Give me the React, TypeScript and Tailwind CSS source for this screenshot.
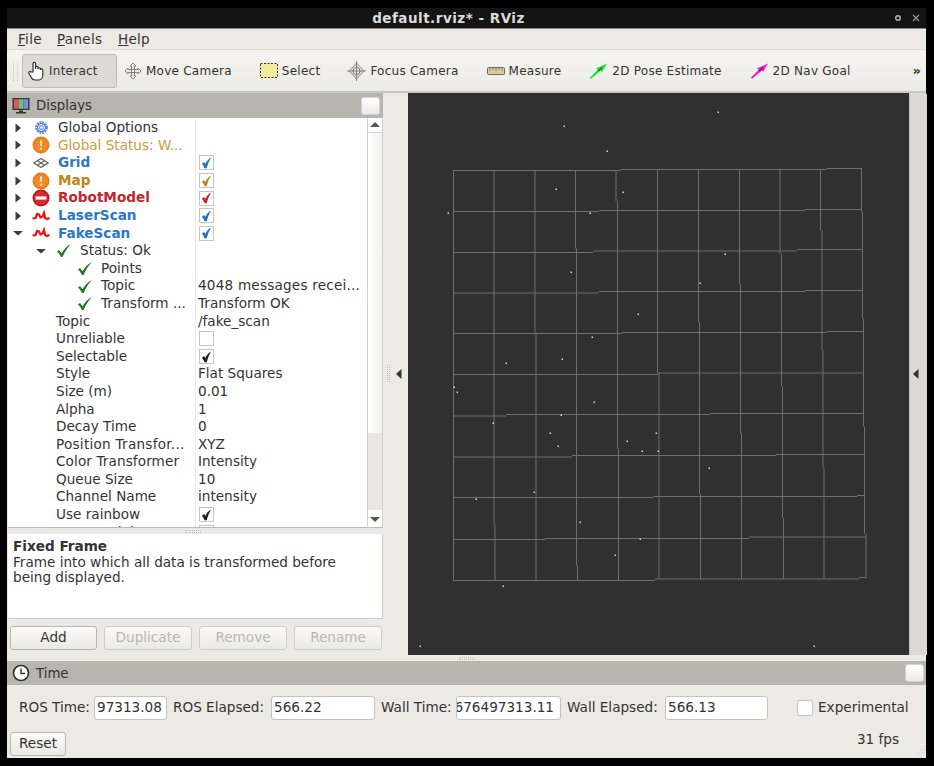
import React from "react";

const H: number[][] = [
  [170.5,453,621],[169.5,621,827],[168.5,827,862],
  [211.5,453,599],[210.5,599,805],[209.5,805,862],
  [252.5,453,593],[251,593,797],[249.5,797,863],
  [293,453,599],[291.5,599,805],[290.5,805,863],
  [333.5,453,622],[332.5,622,827],[331.5,827,863],
  [374.5,453,658],[373,658,864],
  [416,453,506],[414.5,506,710],[413.5,710,864],
  [457,453,572],[455.5,572,776],[454.5,776,865],
  [497.5,453,653],[496.5,653,857],[495.5,857,865],
  [539.5,453,545],[538.5,545,749],[537,749,866],
  [580.5,453,655],[579,655,859],[577.5,859,866],
];
const V: number[][] = [
  [453.5,170,580.5],
  [494,170,524.5],[495,524.5,580],
  [535,170,332.5],[536,332.5,580],
  [575.5,170,248.5],[576.5,248.5,565],[577.5,565,580],
  [616,170,201],[617.5,201,448.5],[618.5,448.5,580],
  [657.5,170,373],[659,373,579],
  [698.5,170,322],[699.5,322,493.5],[700.5,493.5,579],
  [739.5,170,284],[740.5,284,433],[741.5,433,579],
  [780,170,253.5],[781.5,253.5,386],[782.5,386,518],[783.5,518,579],
  [820.5,170,230.5],[822,230.5,350],[823,350,467.5],[824,467.5,579],
  [861.5,169,211.5],[862.5,211.5,319],[863.5,319,426.5],[864.5,426.5,533.5],[866,533.5,578],
];
const DOTS: number[][] = [
  [564,126],[718,112],[607,151],[556,189],[623,192],[448,213],[590,213],[571,272],[725,254],[700,283],
  [638,314],[592,337],[506,363],[562,359],[454,387],[457,392],[594,402],[561,415],[493,423],[550,433],
  [558,446],[627,441],[656,433],[642,451],[658,451],[709,468],[476,499],[534,492],[580,522],[640,539],
  [615,555],[503,586],[420,646],[814,646],
];

const font = "font-['DejaVu_Sans',sans-serif]";

function Arrow({ open }: { open?: boolean }) {
  return (
    <svg width="12" height="12" viewBox="0 0 12 12" className="shrink-0">
      {open ? <path d="M1 4h10L6 8.500z" fill="#3c3c3c" /> : <path d="M3.500 1.500v9L9 6z" fill="#3c3c3c" />}
    </svg>
  );
}
function Gear() {
  return (
    <svg width="15" height="15" viewBox="0 0 24 24">
      <circle cx="12" cy="12" r="8" fill="none" stroke="#5c8fd6" strokeWidth="4.500" strokeDasharray="3 1.200" />
      <circle cx="12" cy="12" r="6.400" fill="none" stroke="#3f74c2" strokeWidth="1.600" />
      <circle cx="12" cy="12" r="3" fill="none" stroke="#6d9be0" strokeWidth="2" />
    </svg>
  );
}
function Warn() {
  return (
    <svg width="18" height="18" viewBox="0 0 18 18">
      <circle cx="9" cy="9" r="8.500" fill="#ea7d18" />
      <circle cx="9" cy="9" r="6.500" fill="#f08a2a" />
      <rect x="8" y="4" width="2" height="6" rx="1" fill="#fbdcb8" />
      <circle cx="9" cy="12.800" r="1.200" fill="#fbdcb8" />
    </svg>
  );
}
function Err() {
  return (
    <svg width="18" height="18" viewBox="0 0 18 18">
      <circle cx="9" cy="9" r="8.500" fill="#c4141c" />
      <circle cx="9" cy="9" r="6.800" fill="#d92a2f" />
      <rect x="3.600" y="7.400" width="10.800" height="3.200" fill="#ffffff" />
    </svg>
  );
}
function GridIcon() {
  return (
    <svg width="16" height="12" viewBox="0 0 16 12">
      <path d="M8 1.500 15 6l-7 4.500L1 6zM4.500 3.800 11.500 8.200M11.500 3.800 4.500 8.200" fill="none" stroke="#666" strokeWidth="1.300" />
    </svg>
  );
}
function Laser() {
  return (
    <svg width="18" height="12" viewBox="0 0 18 12">
      <path d="M0.500 8.500 3.500 8 5 4 7 4.500 8.500 7.500 10.500 6.500 12 3 13 8 15 9 17.500 8" fill="none" stroke="#ee1111" strokeWidth="2.200" />
    </svg>
  );
}
function Check() {
  return (
    <svg width="16" height="15" viewBox="0 0 16 15">
      <path d="M1 8.500 3 7l2.600 3.300C7.800 6.400 10.500 3.200 15 1c-3.400 3.600-6.200 7.600-8.400 13h-1.600C4 11.800 2.700 10 1 8.500z" fill="#1f7a26" />
    </svg>
  );
}
function Box({ color, checked = true }: { color?: string; checked?: boolean }) {
  return (
    <span className="w-[15px] h-[15px] shrink-0 ml-[1px] border border-[#c8c6c2] bg-white flex items-center justify-center">
      {checked && (
        <svg width="11" height="12" viewBox="0 0 10 11">
          <path d="M0.800 6.200 2.800 4.600 4 6.500C5.100 4 6.500 2 9.300 0.500 7.600 3.200 6.200 6.400 5.200 10.300H3.200C2.700 8.600 1.800 7.200 0.800 6.200z" fill={color || "#1e1e1e"} />
        </svg>
      )}
    </span>
  );
}

function Row({ left, right }: { left: React.ReactNode; right?: React.ReactNode }) {
  return (
    <div className="h-[17.6px] flex items-center shrink-0">
      <div className="w-[187px] shrink-0 flex items-center whitespace-nowrap">{left}</div>
      <div className="w-px h-full bg-[#ebebeb] shrink-0" />
      <div className="flex-1 flex items-center whitespace-nowrap text-[#333] pl-[2px]">{right}</div>
    </div>
  );
}
function Top({ open, icon, text, cls }: { open?: boolean; icon: React.ReactNode; text: string; cls: string }) {
  return (
    <>
      <span className="w-[20px] flex justify-center shrink-0"><Arrow open={open} /></span>
      <span className="w-[26px] flex justify-center shrink-0">{icon}</span>
      <span className={`ml-[4px] ${cls}`}>{text}</span>
    </>
  );
}
function Leaf({ text }: { text: string }) {
  return (
    <>
      <span className="w-[64px] shrink-0" />
      <span className="w-[26px] flex justify-center shrink-0"><Check /></span>
      <span className="ml-[3px] text-[#333]">{text}</span>
    </>
  );
}
function Prop({ text, cls = "" }: { text: string; cls?: string }) {
  return <span className={`pl-[48px] text-[#333] ${cls}`}>{text}</span>;
}

function ToolItem({ icon, text, cls }: { icon: React.ReactNode; text: string; cls: string }) {
  return (
    <div className={`flex items-center shrink-0 text-[#333] ${cls}`}>
      {icon}
      <span className="ml-[4px] text-[12px] tracking-[0.25px]">{text}</span>
    </div>
  );
}
function Dots({ cls }: { cls: string }) {
  return <div className={`border-dotted border-[#c4c1bb] ${cls}`} />;
}
function PoseArrow({ color, dark }: { color: string; dark: string }) {
  return (
    <svg width="19" height="16" viewBox="0 0 19 16" className="shrink-0">
      <path d="M0.500 15 9 6.500 6.800 5.500 18 0.500 13 9 11.800 7.500 2.500 15.500z" fill={color} />
      <path d="M9 8 13 4.500" stroke={dark} strokeWidth="1.500" />
    </svg>
  );
}
function Btn({ text, disabled, cls }: { text: string; disabled?: boolean; cls: string }) {
  return (
    <div className={`h-[24px] shrink-0 rounded-[3px] border flex items-center justify-center bg-gradient-to-b from-[#fbfaf8] to-[#ebe9e5] ${disabled ? "border-[#d0cec9] text-[#b9b7b3]" : "border-[#b9b6b0] text-[#333]"} ${cls}`}>
      {text}
    </div>
  );
}
function Field({ text, cls, end }: { text: string; cls: string; end?: boolean }) {
  return (
    <div className={`h-[24px] shrink-0 bg-white border border-[#c6c3be] rounded-[3px] flex items-center overflow-hidden whitespace-nowrap text-[#333] pl-[2px] ${end ? "justify-end pr-[6px]" : "pr-[2px]"} ${cls}`}>
      {text}
    </div>
  );
}
function MiniBtn() {
  return <div className="w-[19px] h-[18px] shrink-0 rounded-[3px] bg-gradient-to-b from-white to-[#eceae6] border border-[#d6d3ce]" />;
}
function Tri({ dir }: { dir: "up" | "down" | "left" }) {
  const d = dir === "up" ? "M1 8h10L6 3z" : dir === "down" ? "M1 4h10L6 9z" : "M8.500 1v10L3 6z";
  return <svg width="12" height="12" viewBox="0 0 12 12"><path d={d} fill={dir === "left" ? "#333" : "#555"} /></svg>;
}

export default function App() {
  return (
    <div className={`w-[934px] h-[766px] bg-black pt-[8px] pl-[7px] overflow-hidden text-[13.6px] leading-none ${font}`}>
      <div className="w-[919px] h-[750px] bg-[#edeae5] flex flex-col">
        {/* title */}
        <div className="h-[21px] shrink-0 bg-[#141414] border-b border-[#8c8a86] relative flex items-center justify-center pr-[36px] pt-[1px]">
          <span className="font-bold text-[13.5px] tracking-[0.5px] text-[#dcdcdc]">default.rviz* - RViz</span>
          <div className="absolute right-[6px] top-[6px] flex items-center gap-[10px]">
            <svg width="8" height="8" viewBox="0 0 8 8"><circle cx="4" cy="4" r="2.300" fill="none" stroke="#b5b5b5" strokeWidth="1.400" /></svg>
            <svg width="8" height="8" viewBox="0 0 8 8"><path d="M1 1l6 6M7 1l-6 6" stroke="#9a9a9a" strokeWidth="1.200" /></svg>
          </div>
        </div>
        {/* menu */}
        <div className="h-[21px] shrink-0 flex items-center pl-[11px] pt-[1px] text-[#333] text-[13.5px] tracking-[0.3px] border-b border-[#dedbd6]">
          <span className="w-[39px]"><span className="underline">F</span>ile</span>
          <span className="w-[61px]"><span className="underline">P</span>anels</span>
          <span><span className="underline">H</span>elp</span>
        </div>
        {/* toolbar */}
        <div className="h-[43px] shrink-0 flex items-center pt-[1px] bg-gradient-to-b from-[#f6f4f1] to-[#ecebe6] border-b-2 border-[#c9c6c0] relative">
          <Dots cls="ml-[6px] w-[5px] h-[19px] border-l border-r shrink-0" />
          <div className="ml-[4px] w-[95px] h-[34px] shrink-0 bg-[#dddad6] border border-[#bfbcb7] rounded-[3px] flex items-center pl-[5px] text-[#333]">
            <svg width="17" height="20" viewBox="0 0 17 20" className="shrink-0">
              <path d="M5 11V2.500a1.300 1.300 0 0 1 2.600 0V8V6.500a1.200 1.200 0 0 1 2.400 0V8a1.200 1.200 0 0 1 2.400 0v1a1.200 1.200 0 0 1 2.400 0v5c0 2.500-1.500 5-4 5H7c-2 0-3-1-4-3L1 12.500c-.8-1.500 1-2.500 2-1.500z" fill="#fff" stroke="#222" strokeWidth="1.100" />
            </svg>
            <span className="ml-[4px] text-[12px] tracking-[0.25px]">Interact</span>
          </div>
          <ToolItem cls="ml-[7px]" text="Move Camera" icon={
            <svg width="18" height="18" viewBox="0 0 18 18" className="shrink-0">
              <path d="M9 1 12 4H10.500V7.500H7.500V4H6zM9 17 6 14H7.500V10.500H10.500V14H12zM1 9 4 6V7.500H7.500V10.500H4V12zM17 9 14 12V10.500H10.500V7.500H14V6z" fill="#e8e6e2" stroke="#777" strokeWidth="0.900" />
            </svg>} />
          <ToolItem cls="ml-[28px]" text="Select" icon={
            <svg width="18" height="16" viewBox="0 0 18 16" className="shrink-0">
              <rect x="0.500" y="0.500" width="17" height="14" fill="#f6eb9a" stroke="#333" strokeDasharray="2 1.500" />
            </svg>} />
          <ToolItem cls="ml-[27px]" text="Focus Camera" icon={
            <svg width="19" height="20" viewBox="0 0 19 20" className="shrink-0">
              <path d="M9.500 2 17 10 9.500 18 2 10z" fill="#dcdad6" stroke="#8a8a8a" strokeWidth="0.900" />
              <circle cx="9.500" cy="10" r="3.500" fill="#f0efec" stroke="#777" />
              <path d="M9.500 0V20M0 10H19" stroke="#777" strokeWidth="0.900" />
            </svg>} />
          <ToolItem cls="ml-[28px]" text="Measure" icon={
            <svg width="18" height="8" viewBox="0 0 18 8" className="shrink-0">
              <rect x="0.500" y="0.500" width="17" height="7" rx="1" fill="#d8cd92" stroke="#6a6a62" />
              <path d="M3 1v3M6 1v2M9 1v3M12 1v2M15 1v3" stroke="#6a6a62" strokeWidth="0.800" />
            </svg>} />
          <ToolItem cls="ml-[28px]" text="2D Pose Estimate" icon={<PoseArrow color="#19e63c" dark="#0e7a22" />} />
          <ToolItem cls="ml-[28px]" text="2D Nav Goal" icon={<PoseArrow color="#f01ccf" dark="#8a1078" />} />
          <span className="absolute right-[5px] top-[14px] font-bold text-[#333] text-[13px]">»</span>
        </div>
        {/* main */}
        <div className="h-[562px] shrink-0 flex">
          <div className="w-[376px] shrink-0 flex flex-col">
            <div className="h-[25px] shrink-0 bg-[#b8b4ae] flex items-center pl-[5px] pr-[3px] text-[#333] text-[13.3px]">
              <svg width="18" height="18" viewBox="0 0 18 18" className="shrink-0">
                <rect x="0.500" y="1" width="17" height="12" fill="#333" />
                <rect x="1.800" y="2.200" width="4.800" height="9.600" fill="#e2555a" />
                <rect x="6.600" y="2.200" width="4.800" height="9.600" fill="#6cc070" />
                <rect x="11.400" y="2.200" width="4.800" height="9.600" fill="#7a8fe0" />
                <path d="M7 13.500h4V15h3v1.500H4V15h3z" fill="#333" />
              </svg>
              <span className="ml-[6px] flex-1">Displays</span>
              <MiniBtn />
            </div>
            <div className="h-[410px] shrink-0 flex ml-px bg-white overflow-hidden border-b border-[#bcb9b3] relative">
              <div className="flex-1 flex flex-col overflow-hidden pt-[1px]">
                <Row left={<Top icon={<Gear />} text="Global Options" cls="text-[#333]" />} />
                <Row left={<Top icon={<Warn />} text="Global Status: W..." cls="text-[#cf9a3c]" />} />
                <Row left={<Top icon={<GridIcon />} text="Grid" cls="font-bold text-[#2b78c9]" />} right={<Box color="#1f6fc4" />} />
                <Row left={<Top icon={<Warn />} text="Map" cls="font-bold text-[#bf8414]" />} right={<Box color="#bf8414" />} />
                <Row left={<Top icon={<Err />} text="RobotModel" cls="font-bold text-[#c2262c]" />} right={<Box color="#c2262c" />} />
                <Row left={<Top icon={<Laser />} text="LaserScan" cls="font-bold text-[#2b78c9]" />} right={<Box color="#1f6fc4" />} />
                <Row left={<Top open icon={<Laser />} text="FakeScan" cls="font-bold text-[#2b78c9]" />} right={<Box color="#1f6fc4" />} />
                <Row left={<><span className="w-[23px] shrink-0" /><span className="w-[20px] flex justify-center shrink-0"><Arrow open /></span><span className="w-[26px] flex justify-center shrink-0"><Check /></span><span className="ml-[3px] text-[#333]">Status: Ok</span></>} />
                <Row left={<Leaf text="Points" />} />
                <Row left={<Leaf text="Topic" />} right={<span className="tracking-[0.2px]">4048 messages recei...</span>} />
                <Row left={<Leaf text="Transform ..." />} right="Transform OK" />
                <Row left={<Prop text="Topic" />} right="/fake_scan" />
                <Row left={<Prop text="Unreliable" />} right={<Box checked={false} />} />
                <Row left={<Prop text="Selectable" />} right={<Box />} />
                <Row left={<Prop text="Style" />} right="Flat Squares" />
                <Row left={<Prop text="Size (m)" />} right="0.01" />
                <Row left={<Prop text="Alpha" />} right="1" />
                <Row left={<Prop text="Decay Time" />} right="0" />
                <Row left={<Prop text="Position Transfor..." cls="tracking-[0.25px]" />} right="XYZ" />
                <Row left={<Prop text="Color Transformer" cls="tracking-[0.1px]" />} right="Intensity" />
                <Row left={<Prop text="Queue Size" />} right="10" />
                <Row left={<Prop text="Channel Name" />} right="intensity" />
                <Row left={<Prop text="Use rainbow" />} right={<Box />} />
                <Row left={<Prop text="Invert Rainbow" />} right={<Box checked={false} />} />
              </div>
              <div className="w-[16px] shrink-0 border-l border-r border-[#d4d1cc] flex flex-col">
                <div className="h-[15px] shrink-0 border-b border-[#d8d6d2] flex items-center justify-center"><Tri dir="up" /></div>
                <div className="h-[300px] shrink-0 bg-gradient-to-r from-white to-[#f4f3f1]" />
                <div className="flex-1 bg-[#e9e7e4]" />
                <div className="h-[17px] shrink-0 flex items-center justify-center"><Tri dir="down" /></div>
              </div>
            </div>
            <div className="h-[6px] shrink-0 flex justify-center items-center pr-[4px]">
              <Dots cls="w-[16px] h-[3px] border-t border-b" />
            </div>
            <div className="h-[85px] shrink-0 ml-px bg-white border-b border-r border-[#cfccc7] px-[5px] pt-[5px] text-[#333] leading-[15.5px]">
              <div className="font-bold">Fixed Frame</div>
              <div>Frame into which all data is transformed before<br />being displayed.</div>
            </div>
            <div className="flex mt-[7px] ml-[3px] gap-[7px]">
              <Btn text="Add" cls="w-[87px]" />
              <Btn text="Duplicate" disabled cls="w-[88px]" />
              <Btn text="Remove" disabled cls="w-[88px]" />
              <Btn text="Rename" disabled cls="w-[88px]" />
            </div>
          </div>
          <div className="w-[25px] shrink-0 flex items-center relative">
            <Dots cls="ml-[4px] w-[3px] h-[17px] border-l border-r shrink-0 -mt-[1px]" />
            <span className="ml-[3px] -mt-[1px]"><Tri dir="left" /></span>
          </div>
          <svg width="501" height="562" viewBox="408 93 501 562" className="shrink-0 bg-[#303030]">
            <g stroke="#6e6e6e" strokeWidth="1" fill="none">
              {H.map((l, i) => <line key={i} x1={l[1]} x2={l[2]} y1={l[0]} y2={l[0]} />)}
              {V.map((l, i) => <line key={i} x1={l[0]} x2={l[0]} y1={l[1]} y2={l[2]} />)}
            </g>
            {DOTS.map((d, i) => <rect key={i} x={d[0] - 0.5} y={d[1] - 0.5} width="1.500" height="1.500" fill="#d8d8d8" />)}
          </svg>
          <div className="flex-1 bg-[#dcd9d5] border-l border-[#c2bfba] rounded-t-[2px] flex items-center justify-center pr-[5px]">
            <span className="-mt-[1px]"><Tri dir="left" /></span>
          </div>
        </div>
        <div className="h-[6px] shrink-0 flex justify-center items-center">
          <Dots cls="w-[16px] h-[3px] border-t border-b" />
        </div>
        {/* time panel */}
        <div className="h-[24px] shrink-0 bg-[#b8b4ae] flex items-center pl-[5px] pr-[2px] text-[#333] text-[13.3px]">
          <svg width="18" height="18" viewBox="0 0 18 18" className="shrink-0">
            <circle cx="9" cy="9" r="7.500" fill="#fff" stroke="#333" strokeWidth="1.700" />
            <path d="M9 4.500V9.500H13" fill="none" stroke="#333" strokeWidth="1.500" />
          </svg>
          <span className="ml-[6px] mt-[1px] flex-1">Time</span>
          <MiniBtn />
        </div>
        <div className="flex items-center mt-[11px] text-[#333] whitespace-nowrap">
          <span className="ml-[12px] w-[75px]">ROS Time:</span>
          <Field text="97313.08" cls="w-[73px]" />
          <span className="ml-[6px] w-[98px]">ROS Elapsed:</span>
          <Field text="566.22" cls="w-[104px]" />
          <span className="ml-[6px] w-[75px]">Wall Time:</span>
          <Field text="1676497313.11" end cls="w-[105px]" />
          <span className="ml-[6px] w-[98px]">Wall Elapsed:</span>
          <Field text="566.13" cls="w-[103px]" />
          <span className="ml-[29px] w-[16px] h-[16px] bg-white border border-[#c6c3be] rounded-[2px] shrink-0" />
          <span className="ml-[5px]">Experimental</span>
        </div>
        <div className="flex items-center justify-between mt-[12px] pl-[3px] pr-[27px] relative">
          <Btn text="Reset" cls="w-[56px] h-[23px]" />
          <span className="text-[#333] -mt-[8px]">31 fps</span>
          <svg width="8" height="10" viewBox="0 0 8 10" className="absolute right-0 bottom-0">
            <path d="M6 1h1M6 4h1M3 4h1M6 7h1M3 7h1M0 7h1" stroke="#c4c1bb" />
          </svg>
        </div>
      </div>
    </div>
  );
}
